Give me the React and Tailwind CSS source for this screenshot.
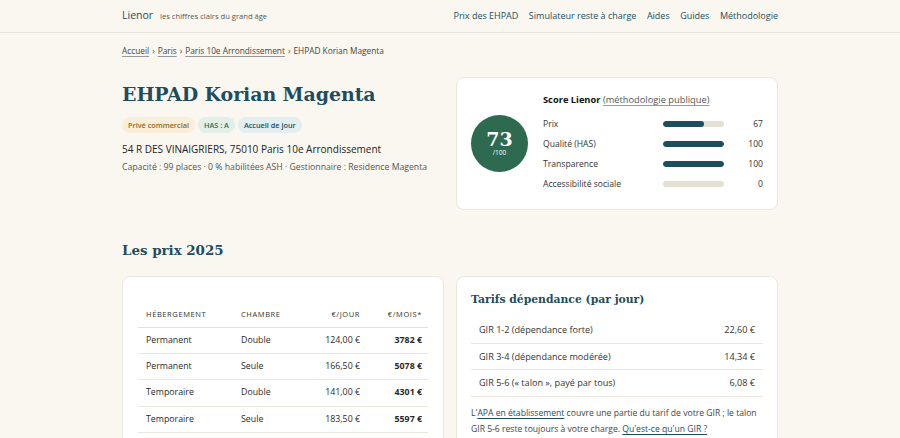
import React from "react";

function Bar({ v }) {
  return (
    <div className="w-[61px] h-[6px] rounded-full bg-[#e4e0d3] overflow-hidden">
      <div className="h-full rounded-full bg-[#1d4d5e]" style={{ width: `${v}%` }} />
    </div>
  );
}

export default function App() {
  const scores = [
    ["Prix", 67],
    ["Qualité (HAS)", 100],
    ["Transparence", 100],
    ["Accessibilité sociale", 0],
  ];
  const prices = [
    ["Permanent", "Double", "124,00 €", "3782 €"],
    ["Permanent", "Seule", "166,50 €", "5078 €"],
    ["Temporaire", "Double", "141,00 €", "4301 €"],
    ["Temporaire", "Seule", "183,50 €", "5597 €"],
  ];
  const gir = [
    ["GIR 1-2 (dépendance forte)", "22,60 €"],
    ["GIR 3-4 (dépendance modérée)", "14,34 €"],
    ["GIR 5-6 (« talon », payé par tous)", "6,08 €"],
  ];
  return (
    <div className="min-h-[438px] bg-[#faf7f0] text-[#2a2a2a] font-['Open_Sans','Noto_Sans',sans-serif]">
      <header className="border-b border-[#e8e4da] h-[33px]">
        <div className="w-[656px] mx-auto h-full flex items-center justify-between">
          <div className="flex items-baseline gap-[7px]">
            <span className="text-[10.5px] text-[#1d4d5e]">Lienor</span>
            <span className="text-[7.6px] text-[#555]">les chiffres clairs du grand âge</span>
          </div>
          <nav className="flex gap-[10.5px] text-[9px] text-[#1d4d5e]">
            <a>Prix des EHPAD</a>
            <a>Simulateur reste à charge</a>
            <a>Aides</a>
            <a>Guides</a>
            <a>Méthodologie</a>
          </nav>
        </div>
      </header>

      <main className="w-[656px] mx-auto">
        <div className="pt-[12px] text-[8.3px] text-[#444] flex gap-[3px] h-[24px]">
          <a className="underline decoration-[#999] underline-offset-2">Accueil</a>
          <span>›</span>
          <a className="underline decoration-[#999] underline-offset-2">Paris</a>
          <span>›</span>
          <a className="underline decoration-[#999] underline-offset-2">Paris 10e Arrondissement</a>
          <span>›</span>
          <span>EHPAD Korian Magenta</span>
        </div>

        <div className="grid grid-cols-2 gap-3 mt-[20px]">
          <div className="pt-[4px]">
            <h1 className="font-['DejaVu_Serif',serif] font-bold text-[19px] leading-[26px] text-[#1d4d5e] tracking-[-0.1px]">
              EHPAD Korian Magenta
            </h1>
            <div className="flex gap-[3px] mt-[10px] text-[7.3px] font-semibold">
              <span className="px-[6px] h-[16px] flex items-center rounded-full bg-[#fbeed8] text-[#946620]">Privé commercial</span>
              <span className="px-[6px] h-[16px] flex items-center rounded-full bg-[#e2efe8] text-[#2e6b55]">HAS : A</span>
              <span className="px-[6px] h-[16px] flex items-center rounded-full bg-[#e2eef0] text-[#1d4d5e]">Accueil de jour</span>
            </div>
            <div className="mt-[9px] text-[10px] text-[#222] leading-[14px]">54 R DES VINAIGRIERS, 75010 Paris 10e Arrondissement</div>
            <div className="mt-[5px] text-[8.7px] text-[#555] leading-[12px] whitespace-nowrap">Capacité : 99 places · 0 % habilitées ASH · Gestionnaire : Residence Magenta</div>
          </div>

          <div className="bg-white border border-[#ece8df] rounded-[8px] h-[133px] flex items-center px-[14px]">
            <div className="w-[57px] h-[57px] rounded-full bg-[#2d6a4f] text-white flex flex-col items-center justify-center shrink-0">
              <span className="font-['DejaVu_Serif',serif] font-bold text-[19px] leading-[19px]">73</span>
              <span className="text-[6.5px] leading-[8px]">/100</span>
            </div>
            <div className="ml-[15px] flex-1">
              <div className="text-[9.3px] mb-[7px]">
                <span className="font-bold text-[#111]">Score Lienor</span>{" "}
                <span className="underline underline-offset-2 text-[#555] decoration-[#999]">(méthodologie publique)</span>
              </div>
              {scores.map(([l, v]) => (
                <div key={l} className="h-[20px] flex items-center text-[8.6px] text-[#333]">
                  <span className="flex-1">{l}</span>
                  <Bar v={v} />
                  <span className="w-[39px] text-right">{v}</span>
                </div>
              ))}
            </div>
          </div>
        </div>

        <h2 className="mt-[30px] font-['DejaVu_Serif',serif] font-bold text-[13.4px] text-[#1d4d5e]">Les prix 2025</h2>

        <div className="grid grid-cols-2 gap-3 mt-[16px]">
          <div className="bg-white border border-[#ece8df] rounded-[8px] px-[15px] pt-[25px] h-[200px]">
            <table className="w-full text-[8.8px] border-collapse">
              <thead>
                <tr className="border-b border-[#e6e2d9] text-[7.5px] uppercase tracking-[0.6px] text-[#333]">
                  <th className="text-left font-normal pl-[8px] h-[25px] w-[103px]">Hébergement</th>
                  <th className="text-left font-normal">Chambre</th>
                  <th className="text-right font-normal">€/jour</th>
                  <th className="text-right font-normal pr-[6px] w-[68px]">€/mois*</th>
                </tr>
              </thead>
              <tbody>
                {prices.map((r, i) => (
                  <tr key={i} className="border-b border-[#ebe7de] h-[26.3px]">
                    <td className="pl-[8px] w-[103px]">{r[0]}</td>
                    <td>{r[1]}</td>
                    <td className="text-right">{r[2]}</td>
                    <td className="text-right font-bold pr-[6px] w-[68px]">{r[3]}</td>
                  </tr>
                ))}
              </tbody>
            </table>
          </div>

          <div className="bg-white border border-[#ece8df] rounded-[8px] px-[14px] pt-[15px] h-[200px]">
            <h3 className="font-['DejaVu_Serif',serif] font-bold text-[10.8px] text-[#1d4d5e]">Tarifs dépendance (par jour)</h3>
            <div className="mt-[9px] text-[9.1px] text-[#333]">
              {gir.map(([l, v]) => (
                <div key={l} className="h-[26.5px] flex items-center justify-between px-[8px] border-b border-[#ebe7de]">
                  <span>{l}</span>
                  <span>{v}</span>
                </div>
              ))}
            </div>
            <p className="mt-[8px] text-[8.6px] leading-[16px] text-[#444]">
              L'<a className="underline underline-offset-2 text-[#1d4d5e]">APA en établissement</a> couvre une partie du tarif de votre GIR ; le talon GIR 5-6 reste toujours à votre charge.{" "}
              <a className="underline underline-offset-2 text-[#1d4d5e]">Qu'est-ce qu'un GIR ?</a>
            </p>
          </div>
        </div>
      </main>
    </div>
  );
}
